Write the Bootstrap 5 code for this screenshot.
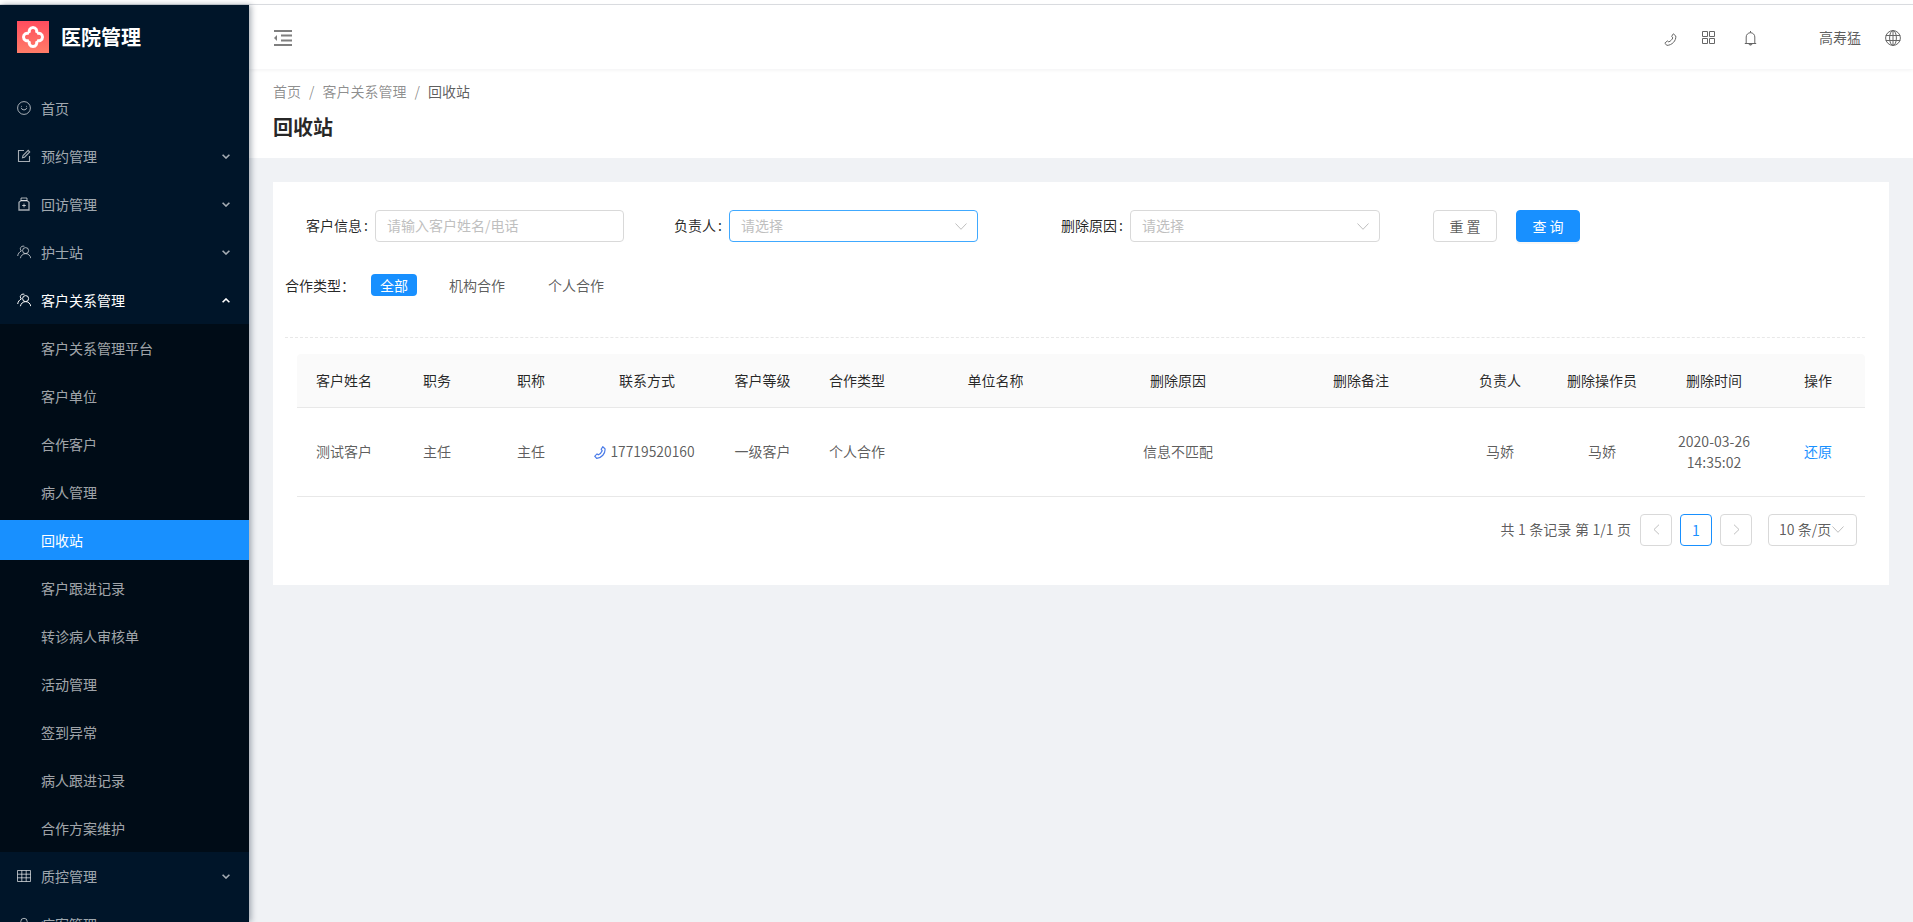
<!doctype html>
<html lang="zh-CN">
<head>
<meta charset="utf-8">
<title>回收站</title>
<link href="https://cdn.jsdelivr.net/npm/bootstrap@5.3.0/dist/css/bootstrap.min.css" rel="stylesheet">
<style>
html,body{height:100%;overflow:hidden}
body{font-family:"Noto Sans CJK SC","Liberation Sans",sans-serif;font-size:14px;color:rgba(0,0,0,.65);background:#fff}
.top-strip{height:5px;border-bottom:1px solid #dcdee2}
.app-shell{height:917px}
.side{width:249px;flex:none;background:#001529;color:rgba(255,255,255,.65);overflow:hidden;box-shadow:2px 0 6px rgba(0,21,41,.35);z-index:3}
.brand{height:64px;padding-left:17px;gap:12px;flex:none}
.brand-logo{width:32px;height:32px;display:block}
.brand-name{font-size:20px;font-weight:700;color:#fff}
.menu{padding-top:15px}
.menu-row{height:48px;padding:0 19px 0 17px}
.menu-row svg.ic{width:14px;height:14px;margin-right:10px;flex:none}
.menu-row .chev{width:8px;height:5px;margin-left:auto;margin-right:0}
.menu-row.open{color:#fff}
.submenu{background:#000c17}
.sub-row{height:40px;margin:4px 0;padding-left:41px}
.sub-row.active-row{background:#1890ff;color:#fff}
.main-col{min-width:0;background:#f0f2f5}
.topbar{height:64px;background:#fff;box-shadow:0 1px 4px rgba(0,21,41,.06);padding:0 12px 0 25px;position:relative;z-index:2}
.topbar svg{display:block;color:#666}
.t-fold{margin-top:2px}
.top-right{margin-left:auto}
.t-phone{width:13px;height:13px;margin-right:25px;margin-top:4px}
.t-grid{width:13px;height:13px;margin-right:29px}
.t-bell{width:13px;height:16px;margin-right:62px;margin-top:2px}
.t-name{margin-right:24px;color:rgba(0,0,0,.65)}
.t-globe{width:16px;height:16px;margin-top:2px}
.page-head{height:89px;background:#fff;padding:12px 24px 0 24px}
.page-head .breadcrumb{--bs-breadcrumb-margin-bottom:0;--bs-breadcrumb-divider-color:rgba(0,0,0,.45);--bs-breadcrumb-item-active-color:rgba(0,0,0,.65);--bs-breadcrumb-item-padding-x:8px;line-height:20px}
.page-head .breadcrumb-item a{color:rgba(0,0,0,.45);text-decoration:none}
.page-title{font-size:20px;font-weight:700;color:rgba(0,0,0,.85);line-height:28px;margin:12px 0 0}
.content-wrap{padding:24px 24px 0}
.panel{background:#fff;height:403px;padding-top:28px}
.lab{color:rgba(0,0,0,.85);text-align:right;padding-right:7px;padding-bottom:2px;margin:0;flex:none;word-spacing:0}
.lab-colon{margin-left:2px}
.lab1{width:102px}.lab2{width:105px}.lab3{width:152px}
.fld{width:249px;height:32px;border:1px solid #d9d9d9;border-radius:4px;font-size:14px;padding:0 11px 2px;color:#bfbfbf;box-shadow:none;flex:none}
.fld-wide{width:250px}
.fld::placeholder{color:#bfbfbf}
.fld.focused{border-color:#40a9ff}
.fld svg{width:12px;height:7px;margin-left:auto;margin-right:-1px;margin-top:2px}
.btn-act{width:64px;height:32px;padding:0;font-size:14px;border-radius:4px;flex:none}
.btn-reset{border:1px solid #d9d9d9;color:rgba(0,0,0,.65);background:#fff;margin-left:53px;margin-right:19px}
.btn-query{border:1px solid #1890ff;color:#fff;background:#1890ff;box-shadow:0 2px 0 rgba(0,0,0,.03)}
.type-row{margin:32px 0 0 12px;height:22px}
.type-lab{width:86px;color:rgba(0,0,0,.85)}
.type-chip{height:22px;line-height:22px;padding:0 9px;border-radius:4px;margin-right:25px;color:rgba(0,0,0,.65)}
.type-chip.on{background:#1890ff;color:#fff;margin-right:23px}
.dash{border-top:1px dashed #e8e8e8;margin:41px 24px 0 12px}
.tbl-wrap{margin:16px 24px 0 24px}
.data-tbl{table-layout:fixed;width:100%;margin:0;--bs-table-color:rgba(0,0,0,.65);--bs-table-border-color:#e8e8e8}
.data-tbl th{height:53px;background:#fafafa;font-weight:400;color:rgba(0,0,0,.85);padding:0;vertical-align:middle;--bs-table-bg:#fafafa}
.data-tbl td{height:89px;padding:0;line-height:21px}
.data-tbl thead tr th:first-child{border-top-left-radius:4px}
.data-tbl thead tr th:last-child{border-top-right-radius:4px}
.pl-a{padding-left:19px!important}
.pl-b{padding-left:16px!important}
.num-phone{font-size:13.8px}
.num-date{font-size:14px}
.td-phone{padding-right:5px!important}
.ph-ic{width:12px;height:13px;color:#4a7be8;vertical-align:-2px;margin-right:4px}
.restore{color:#1890ff;text-decoration:none}
.pager{margin:17px 32px 0 0;height:32px}
.pager-text{word-spacing:.4px}
.pager .pagination{gap:8px;margin:0 16px 0 9px;--bs-pagination-padding-x:0;--bs-pagination-padding-y:0;--bs-pagination-font-size:14px;--bs-pagination-border-color:#d9d9d9;--bs-pagination-color:#1890ff}
.pager .page-link{width:32px;height:32px;line-height:30px;text-align:center;border-radius:4px!important;margin:0!important;display:flex;align-items:center;justify-content:center}
.pager .page-item.cur .page-link{border-color:#1890ff;color:#1890ff}
.pager .page-link svg{width:7px;height:11px;color:#bfbfbf}
.size-sel{width:89px;height:32px;border:1px solid #d9d9d9;border-radius:4px;padding:0 8px 0 10px;gap:1px}
.size-sel svg{width:12px;height:7px;flex:none}
</style>
</head>
<body>
<div class="top-strip"></div>
<div class="app-shell d-flex">
  <aside class="side d-flex flex-column">
    <div class="brand d-flex align-items-center">
      <svg class="brand-logo" viewBox="0 0 32 32"><defs><linearGradient id="lg" x1="0" y1="0" x2="0" y2="1"><stop offset="0" stop-color="#ff4c5e"/><stop offset="1" stop-color="#ff7c68"/></linearGradient></defs><rect width="32" height="32" fill="url(#lg)"/><g fill="none" stroke="#fff" stroke-width="3"><path d="M12.6 12A3.8 3.800 0 1 1 19.400 12"/><path d="M12.600 20A3.800 3.800 0 1 0 19.400 20"/><path d="M12 12.600A3.800 3.800 0 1 0 12 19.400"/><path d="M20 12.600A3.800 3.800 0 1 1 20 19.400"/></g></svg>
      <span class="brand-name">医院管理</span>
    </div>
    <div class="menu">
      <div class="menu-row d-flex align-items-center"><svg class="ic" viewBox="0 0 14 14" fill="none" stroke="currentColor"><circle cx="7" cy="7" r="6.400"/><path d="M4.200 6.800a2.900 2.900 0 0 0 5.600 0"/><circle cx="4.500" cy="5.300" r=".5" fill="currentColor" stroke="none"/><circle cx="9.500" cy="5.300" r=".5" fill="currentColor" stroke="none"/></svg>首页</div>
      <div class="menu-row d-flex align-items-center"><svg class="ic" viewBox="0 0 14 14" fill="none" stroke="currentColor" stroke-width="1.100"><path d="M12.500 7v5.500h-11v-11H7"/><path d="M5.500 8.800 6 6.600 11.200 1.400l1.500 1.500L7.500 8.200z"/></svg>预约管理<svg class="chev" viewBox="0 0 8 5" fill="none" stroke="currentColor" stroke-width="1.600"><path d="M.6.7 4 4 7.400.7"/></svg></div>
      <div class="menu-row d-flex align-items-center"><svg class="ic" viewBox="0 0 14 14" fill="none" stroke="currentColor"><path d="M4 1h6v2.600H4z"/><path d="M2 13V5.200L4 3.600h6l2 1.600V13z" stroke-width="1.300"/><path d="M7 6.600v3.800M5.100 8.500h3.800"/></svg>回访管理<svg class="chev" viewBox="0 0 8 5" fill="none" stroke="currentColor" stroke-width="1.600"><path d="M.6.7 4 4 7.400.7"/></svg></div>
      <div class="menu-row d-flex align-items-center"><svg class="ic" viewBox="0 0 14 14" fill="none" stroke="currentColor"><circle cx="8.600" cy="5.600" r="3"/><path d="M3.400 13.200c.4-2.600 2.600-4.600 5.200-4.600s4.800 2 5.200 4.600"/><path d="M7.400 1.300A3 3 0 0 0 3.300 3.600c0 1 .4 1.800 1.100 2.400C2.400 6.800 1 8.600.7 11"/></svg>护士站<svg class="chev" viewBox="0 0 8 5" fill="none" stroke="currentColor" stroke-width="1.600"><path d="M.6.7 4 4 7.400.7"/></svg></div>
      <div class="menu-row open d-flex align-items-center"><svg class="ic" viewBox="0 0 14 14" fill="none" stroke="currentColor"><circle cx="8.600" cy="5.600" r="3"/><path d="M3.400 13.200c.4-2.600 2.600-4.600 5.200-4.600s4.800 2 5.200 4.600"/><path d="M7.400 1.300A3 3 0 0 0 3.300 3.600c0 1 .4 1.800 1.100 2.400C2.400 6.800 1 8.600.7 11"/></svg>客户关系管理<svg class="chev" viewBox="0 0 8 5" fill="none" stroke="currentColor" stroke-width="1.600"><path d="M.6 4.300 4 1 7.400 4.300"/></svg></div>
      <div class="submenu d-flex flex-column">
        <div class="sub-row d-flex align-items-center">客户关系管理平台</div>
        <div class="sub-row d-flex align-items-center">客户单位</div>
        <div class="sub-row d-flex align-items-center">合作客户</div>
        <div class="sub-row d-flex align-items-center">病人管理</div>
        <div class="sub-row active-row d-flex align-items-center">回收站</div>
        <div class="sub-row d-flex align-items-center">客户跟进记录</div>
        <div class="sub-row d-flex align-items-center">转诊病人审核单</div>
        <div class="sub-row d-flex align-items-center">活动管理</div>
        <div class="sub-row d-flex align-items-center">签到异常</div>
        <div class="sub-row d-flex align-items-center">病人跟进记录</div>
        <div class="sub-row d-flex align-items-center">合作方案维护</div>
      </div>
      <div class="menu-row d-flex align-items-center"><svg class="ic" viewBox="0 0 14 14" fill="none" stroke="currentColor"><path d="M.5 1.500h13v11H.5zM.5 5.200h13M.5 8.800h13M4.800 1.500v11M9.200 1.500v11"/></svg>质控管理<svg class="chev" viewBox="0 0 8 5" fill="none" stroke="currentColor" stroke-width="1.600"><path d="M.6.7 4 4 7.400.7"/></svg></div>
      <div class="menu-row d-flex align-items-center"><svg class="ic" viewBox="0 0 14 14" fill="none" stroke="currentColor"><circle cx="7" cy="4.500" r="3.200"/><path d="M1.500 13c.4-3 2.700-5 5.500-5s5.100 2 5.500 5"/></svg>病案管理<svg class="chev" viewBox="0 0 8 5" fill="none" stroke="currentColor" stroke-width="1.600"><path d="M.6.7 4 4 7.400.7"/></svg></div>
    </div>
  </aside>
  <div class="main-col flex-grow-1 d-flex flex-column">
    <header class="topbar d-flex align-items-center flex-shrink-0">
      <svg width="18" height="16" viewBox="0 0 18 16" class="t-fold" fill="#7f7f7f"><rect width="18" height="2"/><rect y="14" width="18" height="2"/><rect x="7" y="4.500" width="11" height="2"/><rect x="7" y="9.500" width="11" height="2"/><path d="M3 5v6L0 8z"/></svg>
      <div class="top-right d-flex align-items-center">
        <svg class="t-phone" viewBox="0 0 13 13" fill="none" stroke="currentColor"><path d="M9.300.8 11.800 3C12.300 7.800 8 12.200 3 12.400L.8 10.300 3.300 7.900l1.500 1C6.700 8 8 6.700 8.800 4.900l-1.100-1.600z"/></svg>
        <svg class="t-grid" viewBox="0 0 13 13" fill="none" stroke="currentColor"><path d="M.5.500h5v5h-5zM7.500.500h5v5h-5zM.5 7.500h5v5h-5zM7.500 7.500h5v5h-5z"/></svg>
        <svg class="t-bell" viewBox="0 0 13 16" fill="none" stroke="currentColor"><path d="M.8 13.500h11.400M2.200 13.500V7a4.300 4.300 0 0 1 8.600 0v6.500M6.500 1v1.600"/><path d="M5 14.200a1.600 1.400 0 0 0 3 0" fill="currentColor"/></svg>
        <span class="t-name">高寿猛</span>
        <svg class="t-globe" viewBox="0 0 16 16" fill="none" stroke="currentColor"><circle cx="8" cy="8" r="7.400"/><ellipse cx="8" cy="8" rx="3.400" ry="7.400"/><path d="M8 .6v14.800M.8 5.500h14.400M.8 10.500h14.400"/></svg>
      </div>
    </header>
    <section class="page-head flex-shrink-0">
      <nav aria-label="breadcrumb"><ol class="breadcrumb"><li class="breadcrumb-item"><a href="#">首页</a></li><li class="breadcrumb-item"><a href="#">客户关系管理</a></li><li class="breadcrumb-item active">回收站</li></ol></nav>
      <h1 class="page-title">回收站</h1>
    </section>
    <div class="content-wrap">
      <div class="panel">
        <div class="d-flex align-items-center">
          <label class="lab lab1">客户信息<span class="lab-colon">:</span></label>
          <input class="form-control fld" placeholder="请输入客户姓名/电话">
          <label class="lab lab2">负责人<span class="lab-colon">:</span></label>
          <div class="fld focused d-flex align-items-center">请选择<svg viewBox="0 0 12 7" fill="none" stroke="currentColor"><path d="M.5.500 6 6.300 11.500.5"/></svg></div>
          <label class="lab lab3">删除原因<span class="lab-colon">:</span></label>
          <div class="fld fld-wide d-flex align-items-center">请选择<svg viewBox="0 0 12 7" fill="none" stroke="currentColor"><path d="M.5.500 6 6.300 11.500.5"/></svg></div>
          <button type="button" class="btn btn-act btn-reset">重 置</button>
          <button type="button" class="btn btn-act btn-query">查 询</button>
        </div>
        <div class="type-row d-flex align-items-center">
          <span class="type-lab">合作类型：</span>
          <span class="type-chip on">全部</span>
          <span class="type-chip">机构合作</span>
          <span class="type-chip">个人合作</span>
        </div>
        <div class="dash"></div>
        <div class="tbl-wrap">
          <table class="table data-tbl align-middle">
            <colgroup><col style="width:110px"><col style="width:94px"><col style="width:74.5px"><col style="width:143px"><col style="width:94.5px"><col style="width:138.5px"><col style="width:135.5px"><col style="width:182px"><col style="width:184px"><col style="width:94px"><col style="width:110px"><col style="width:114px"><col style="width:94px"></colgroup>
            <thead><tr>
              <th class="pl-a">客户姓名</th><th class="pl-b">职务</th><th class="pl-b">职称</th><th class="text-center">联系方式</th><th class="pl-b">客户等级</th><th class="pl-b">合作类型</th><th class="pl-b">单位名称</th><th class="text-center">删除原因</th><th class="text-center">删除备注</th><th class="text-center">负责人</th><th class="text-center">删除操作员</th><th class="text-center">删除时间</th><th class="text-center">操作</th>
            </tr></thead>
            <tbody><tr>
              <td class="pl-a">测试客户</td><td class="pl-b">主任</td><td class="pl-b">主任</td>
              <td class="text-center td-phone"><svg class="ph-ic" viewBox="0 0 12 13" fill="none" stroke="currentColor" stroke-width="1.200"><path d="M8.800.8 11 2.800C11.500 7.600 7.500 12 2.700 12.300L.8 10.200 3 7.900l1.400.9C6.200 7.900 7.500 6.500 8.200 4.800l-1-1.500z"/></svg><span class="num-phone">17719520160</span></td>
              <td class="pl-b">一级客户</td><td class="pl-b">个人合作</td><td></td>
              <td class="text-center">信息不匹配</td><td></td>
              <td class="text-center">马娇</td><td class="text-center">马娇</td>
              <td class="text-center num-date">2020-03-26<br>14:35:02</td>
              <td class="text-center"><a href="#" class="restore">还原</a></td>
            </tr></tbody>
          </table>
        </div>
        <div class="pager d-flex justify-content-end align-items-center">
          <span class="pager-text">共 1 条记录 第 1/1 页</span>
          <ul class="pagination">
            <li class="page-item"><a class="page-link" href="#" aria-label="上一页"><svg viewBox="0 0 7 11" fill="none" stroke="currentColor"><path d="M6 .7 1 5.500 6 10.300"/></svg></a></li>
            <li class="page-item cur"><a class="page-link" href="#">1</a></li>
            <li class="page-item"><a class="page-link" href="#" aria-label="下一页"><svg viewBox="0 0 7 11" fill="none" stroke="currentColor"><path d="M1 .7 6 5.500 1 10.300"/></svg></a></li>
          </ul>
          <div class="size-sel d-flex align-items-center">10 条/页<svg viewBox="0 0 12 7" fill="none" stroke="#bfbfbf"><path d="M.5.500 6 6.300 11.500.5"/></svg></div>
        </div>
      </div>
    </div>
  </div>
</div>
<script src="https://cdn.jsdelivr.net/npm/bootstrap@5.3.0/dist/js/bootstrap.bundle.min.js"></script>
</body>
</html>
